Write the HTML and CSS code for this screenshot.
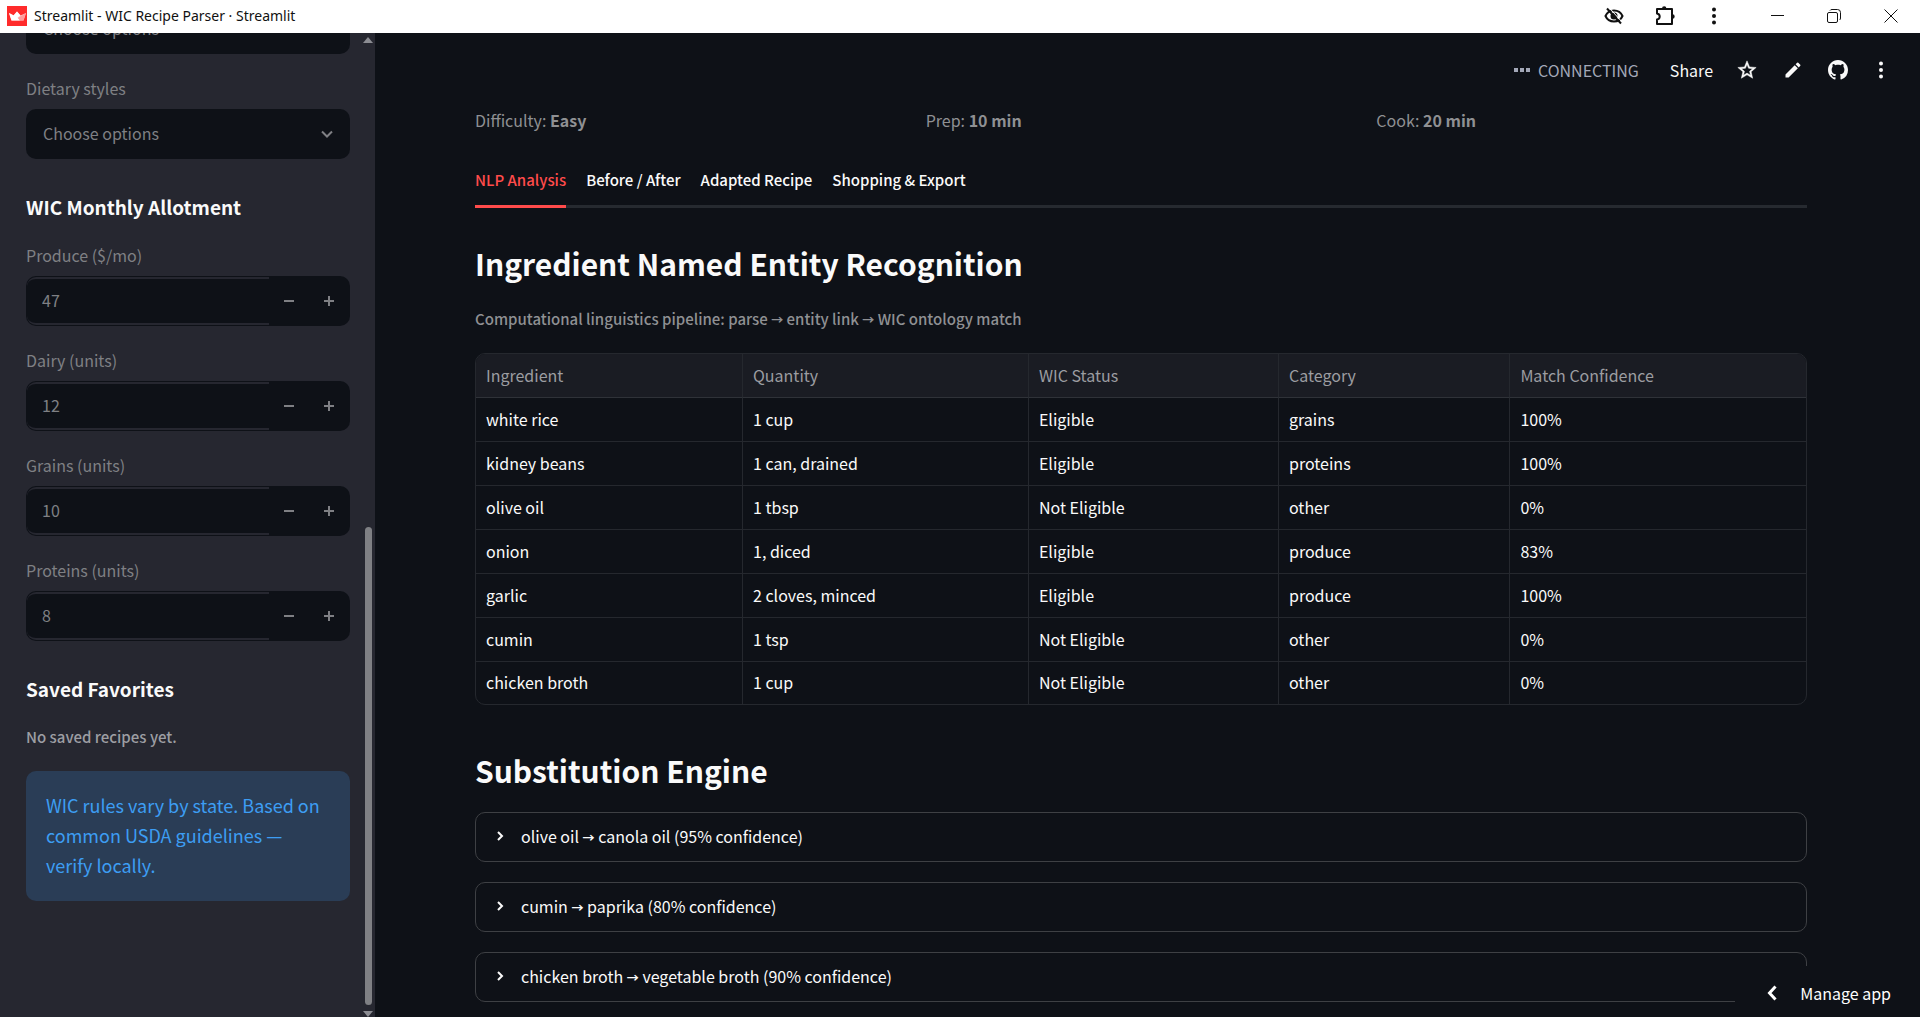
FILE: index.html
```html
<!DOCTYPE html>
<html lang="en">
<head>
<meta charset="utf-8">
<title>WIC Recipe Parser · Streamlit</title>
<link rel="stylesheet" href="styles.css">
</head>
<body>
<header class="titlebar">
  <svg class="app-logo" viewBox="0 0 20 20" aria-hidden="true"><rect width="20" height="20" fill="#ff2b2b"/><path d="M2 7l4.500 2.500L10 5.500l3.500 4L19 7l-2.500 7.500H4.500z" fill="#ffc4c4"/><path d="M2 7l8 4 3 3.500H4.500z" fill="#fff"/><path d="M10 5.500l3.500 4L10 12 6.500 9.500z" fill="#fff"/><path d="M19 7l-8 5 2 2.500h3.500z" fill="#ff9c9c"/></svg>
  <span class="window-title">Streamlit - WIC Recipe Parser · Streamlit</span>
  <div class="window-tools">
    <button class="win-btn" aria-label="Tracking blocked"><svg width="20" height="20" viewBox="0 0 20 20" fill="none" stroke="#111" stroke-width="2"><path d="M1.500 10C3 6.500 6.200 4.500 10 4.500s7 2 8.500 5.500c-1.500 3.500-4.700 5.500-8.500 5.500S3 13.500 1.500 10z"/><circle cx="10" cy="10" r="3.500" fill="#111" stroke="none"/><path d="M3 2.500l14 15"/><path d="M4.500 1l14 15.500" stroke="#fff" stroke-width="1"/></svg></button>
    <button class="win-btn" aria-label="Extensions"><svg width="22" height="22" viewBox="0 0 22 22" fill="none" stroke="#111" stroke-width="2" stroke-linejoin="round"><path d="M4 4h15v15H4v-4.500c3.600-.5 3.600-5.500 0-6z"/><path d="M9 3.500a2.200 2.200 0 0 1 4.400 0zM19.500 9.300a2.200 2.200 0 0 1 0 4.400z" fill="#111" stroke="none"/></svg></button>
    <button class="win-btn" aria-label="Browser menu"><svg width="20" height="20" viewBox="0 0 20 20" fill="#111"><circle cx="10" cy="3.500" r="2"/><circle cx="10" cy="10" r="2"/><circle cx="10" cy="16.500" r="2"/></svg></button>
  </div>
  <div class="window-controls">
    <button class="win-btn" aria-label="Minimize"><svg width="14" height="14" viewBox="0 0 14 14" stroke="#111" fill="none"><path d="M0 6.500h13"/></svg></button>
    <button class="win-btn" aria-label="Restore"><svg width="14" height="14" viewBox="0 0 14 14" stroke="#111" fill="none"><rect x=".5" y="3.500" width="10" height="10" rx="1.500"/><path d="M3 1.500Q3.500.5 5 .5h5.500q3 0 3 3V9q0 1.500-1 2"/></svg></button>
    <button class="win-btn" aria-label="Close"><svg width="14" height="14" viewBox="0 0 14 14" stroke="#111" fill="none"><path d="M.5.5l13 13M13.500.5l-13 13"/></svg></button>
  </div>
</header>
<div class="app">
  <aside class="sidebar">
    <div class="sidebar-content">
      <div class="field">
        <label class="label" for="allergies">Allergies</label>
        <div class="select-wrap"><select class="select" id="allergies"><option>Choose options</option></select></div>
      </div>
      <div class="field">
        <label class="label" for="styles">Dietary styles</label>
        <div class="select-wrap"><select class="select" id="styles"><option>Choose options</option></select><svg class="chevron" width="14" height="14" viewBox="0 0 14 14" fill="none" stroke="#7f8084" stroke-width="2"><path d="M2 4.500l5 5 5-5"/></svg></div>
      </div>
      <h3 class="side-title">WIC Monthly Allotment</h3>
      <div class="field">
        <label class="label" for="produce">Produce ($/mo)</label>
        <div class="number"><input class="number-input" id="produce" type="number" value="47"><button class="step minus" aria-label="Decrease produce"></button><button class="step plus" aria-label="Increase produce"></button></div>
      </div>
      <div class="field">
        <label class="label" for="dairy">Dairy (units)</label>
        <div class="number"><input class="number-input" id="dairy" type="number" value="12"><button class="step minus" aria-label="Decrease dairy"></button><button class="step plus" aria-label="Increase dairy"></button></div>
      </div>
      <div class="field">
        <label class="label" for="grains">Grains (units)</label>
        <div class="number"><input class="number-input" id="grains" type="number" value="10"><button class="step minus" aria-label="Decrease grains"></button><button class="step plus" aria-label="Increase grains"></button></div>
      </div>
      <div class="field">
        <label class="label" for="proteins">Proteins (units)</label>
        <div class="number"><input class="number-input" id="proteins" type="number" value="8"><button class="step minus" aria-label="Decrease proteins"></button><button class="step plus" aria-label="Increase proteins"></button></div>
      </div>
      <h3 class="side-title">Saved Favorites</h3>
      <p class="side-caption">No saved recipes yet.</p>
      <div class="alert">WIC rules vary by state. Based on common USDA guidelines — verify locally.</div>
    </div>
    <div class="scrollbar" aria-hidden="true"><span class="arrow-up"></span><span class="track"></span><span class="thumb"></span><span class="arrow-down"></span></div>
  </aside>
  <main class="main">
    <div class="toolbar">
      <span class="status"><svg width="16" height="4" viewBox="0 0 16 4" fill="#a3a8b8"><path d="M0 0h4v4H0zM6 0h4v4H6zM12 0h4v4h-4z"/></svg>CONNECTING</span>
      <button class="tool share">Share</button>
      <button class="tool" aria-label="Favorite"><svg width="22" height="22" viewBox="0 0 24 24" fill="#fafafa" stroke="#fafafa" stroke-width=".5"><path d="M22 9.240l-7.190-.62L12 2 9.190 8.630 2 9.240l5.460 4.730L5.820 21 12 17.270 18.180 21l-1.630-7.030zM12 15.400l-3.760 2.270 1-4.280-3.320-2.880 4.380-.38L12 6.100l1.710 4.040 4.380.38-3.320 2.880 1 4.280z"/></svg></button>
      <button class="tool" aria-label="Edit"><svg width="20" height="20" viewBox="0 0 24 24" fill="#fafafa"><path d="M3 17.250V21h3.750L17.810 9.940l-3.750-3.750zM20.710 7.040a1 1 0 0 0 0-1.410l-2.340-2.340a1 1 0 0 0-1.410 0l-1.830 1.830 3.750 3.750z"/></svg></button>
      <button class="tool" aria-label="View source"><svg width="20" height="20" viewBox="0 0 16 16" fill="#fafafa"><path d="M8 0C3.580 0 0 3.580 0 8c0 3.540 2.290 6.530 5.470 7.590.4.07.55-.17.55-.38 0-.19-.01-.82-.01-1.490-2.010.37-2.530-.49-2.690-.94-.09-.23-.48-.94-.82-1.130-.28-.15-.68-.52-.01-.53.63-.01 1.080.58 1.230.82.72 1.210 1.870.87 2.330.66.07-.52.28-.87.51-1.070-1.780-.2-3.640-.89-3.640-3.950 0-.87.31-1.590.82-2.150-.08-.2-.36-1.020.08-2.120 0 0 .67-.21 2.200.82.64-.18 1.320-.27 2-.27s1.360.09 2 .27c1.530-1.040 2.200-.82 2.200-.82.44 1.100.16 1.920.08 2.120.51.56.82 1.270.82 2.150 0 3.070-1.870 3.750-3.650 3.950.29.25.54.73.54 1.480 0 1.070-.01 1.930-.01 2.200 0 .21.15.46.55.38A8 8 0 0 0 16 8c0-4.420-3.580-8-8-8z"/></svg></button>
      <button class="tool" aria-label="App menu"><svg width="16" height="20" viewBox="0 0 16 20" fill="#fafafa"><circle cx="8" cy="3.500" r="2"/><circle cx="8" cy="10" r="2"/><circle cx="8" cy="16.500" r="2"/></svg></button>
    </div>
    <div class="content">
      <div class="meta"><span>Difficulty: <b>Easy</b></span><span>Prep: <b>10 min</b></span><span>Cook: <b>20 min</b></span></div>
      <nav class="tabs" role="tablist">
        <button class="tab active" role="tab" aria-selected="true">NLP Analysis</button>
        <button class="tab" role="tab">Before / After</button>
        <button class="tab" role="tab">Adapted Recipe</button>
        <button class="tab" role="tab">Shopping &amp; Export</button>
      </nav>
      <h2 class="title">Ingredient Named Entity Recognition</h2>
      <p class="caption">Computational linguistics pipeline: parse <span class="arrow">→</span> entity link <span class="arrow">→</span> WIC ontology match</p>
      <div class="table-wrap">
        <table class="table">
          <colgroup><col class="c-ingredient"><col class="c-quantity"><col class="c-status"><col class="c-category"><col></colgroup>
          <thead><tr><th>Ingredient</th><th>Quantity</th><th>WIC Status</th><th>Category</th><th>Match Confidence</th></tr></thead>
          <tbody>
            <tr><td>white rice</td><td>1 cup</td><td>Eligible</td><td>grains</td><td>100%</td></tr>
            <tr><td>kidney beans</td><td>1 can, drained</td><td>Eligible</td><td>proteins</td><td>100%</td></tr>
            <tr><td>olive oil</td><td>1 tbsp</td><td>Not Eligible</td><td>other</td><td>0%</td></tr>
            <tr><td>onion</td><td>1, diced</td><td>Eligible</td><td>produce</td><td>83%</td></tr>
            <tr><td>garlic</td><td>2 cloves, minced</td><td>Eligible</td><td>produce</td><td>100%</td></tr>
            <tr><td>cumin</td><td>1 tsp</td><td>Not Eligible</td><td>other</td><td>0%</td></tr>
            <tr><td>chicken broth</td><td>1 cup</td><td>Not Eligible</td><td>other</td><td>0%</td></tr>
          </tbody>
        </table>
      </div>
      <h2 class="title">Substitution Engine</h2>
      <div class="expanders">
        <details class="expander"><summary><svg width="12" height="12" viewBox="0 0 12 12" fill="none" stroke="#fafafa" stroke-width="2"><path d="M4 2l4 4-4 4"/></svg><span>olive oil <span class="arrow">→</span> canola oil (95% confidence)</span></summary></details>
        <details class="expander"><summary><svg width="12" height="12" viewBox="0 0 12 12" fill="none" stroke="#fafafa" stroke-width="2"><path d="M4 2l4 4-4 4"/></svg><span>cumin <span class="arrow">→</span> paprika (80% confidence)</span></summary></details>
        <details class="expander"><summary><svg width="12" height="12" viewBox="0 0 12 12" fill="none" stroke="#fafafa" stroke-width="2"><path d="M4 2l4 4-4 4"/></svg><span>chicken broth <span class="arrow">→</span> vegetable broth (90% confidence)</span></summary></details>
      </div>
    </div>
    <button class="manage"><svg width="10" height="16" viewBox="0 0 10 16" fill="none" stroke="#fff" stroke-width="3"><path d="M8.500 1.500L2.500 8l6 6.500"/></svg>Manage app</button>
  </main>
</div>
</body>
</html>
```
FILE: styles.css
```css
* { box-sizing: border-box; }
body {
  margin: 0;
  height: 100vh;
  display: flex;
  flex-direction: column;
  overflow: hidden;
  background: #0e1117;
  color: #fafafa;
  font: 16px/24px "Noto Sans CJK SC", "Noto Sans", sans-serif;
}
button, input, select { font: inherit; color: inherit; border: 0; padding: 0; background: none; }
h2, h3, p { margin: 0; }
svg { display: block; flex: none; }

.titlebar {
  flex: none;
  height: 33px;
  display: flex;
  align-items: center;
  padding: 0 6px 1px;
  background: #fff;
  color: #111;
}
.app-logo { width: 20px; height: 20px; margin: 0 7px 0 1px; }
.window-title { flex: 1; font: 14px/20px "Noto Sans", sans-serif; }
.window-tools, .window-controls { display: flex; }
.win-btn { width: 50px; height: 32px; display: grid; place-items: center; }
.window-controls { margin-left: 11px; }
.window-controls .win-btn { width: 56px; }
.window-controls .win-btn:last-child { width: 46px; margin-left: 6px; }

.app { flex: 1; min-height: 0; display: flex; }
.sidebar {
  position: relative;
  flex: none;
  width: 375px;
  background: #262730;
  overflow: hidden;
  display: flex;
  flex-direction: column;
  justify-content: flex-end;
}
.sidebar-content { padding: 0 25px 116px 26px; }
.field { margin-bottom: 20px; color: #7f8084; }
.label { display: block; height: 35px; line-height: 28px; }
.select-wrap { position: relative; }
.select {
  appearance: none;
  display: block;
  width: 100%;
  height: 50px;
  padding: 0 17px 2px;
  border-radius: 10px;
  background: #0e1117;
}
.chevron { position: absolute; right: 16px; top: 18px; }
.side-title { height: 47px; margin: 35px 0 0; font-size: 19px; line-height: 26px; font-weight: 700; }
.number {
  display: flex;
  height: 50px;
  padding: 1px;
  border-radius: 10px;
  background: #0e1117;
}
.number-input {
  appearance: textfield;
  flex: 1;
  min-width: 0;
  padding: 0 15px 2px;
  border: solid #262730;
  border-width: 2px 0;
  border-radius: 9px 0 0 9px;
}
.number-input::-webkit-inner-spin-button { appearance: none; }
.step { position: relative; width: 40px; color: #7f8084; }
.step::before, .plus::after {
  content: "";
  position: absolute;
  left: 15px;
  top: 23px;
  width: 10px;
  height: 2px;
  background: currentColor;
}
.plus::after { transform: rotate(90deg); }
.side-caption { height: 48px; font-size: 15px; line-height: 28px; font-weight: 500; color: #9d9ea3; }
.alert {
  padding: 19px 20px 21px;
  border-radius: 10px;
  background: #2a3d56;
  color: #3d9df3;
  font-size: 18px;
  line-height: 30px;
}
.scrollbar { position: absolute; inset: 0 0 0 auto; width: 12px; display: flex; flex-direction: column; align-items: flex-start; }
.arrow-up, .arrow-down { border: solid transparent; border-width: 0 5px; }
.arrow-up { margin-top: 4px; border-bottom: 6px solid #8b8c92; }
.arrow-down { margin-top: 6px; border-top: 6px solid #8b8c92; }
.track { flex: 1; }
.thumb { width: 7px; height: 48.6%; margin-left: 2px; border-radius: 4px; background: #7f8084; }

.main { position: relative; flex: 1; min-width: 0; }
.toolbar { display: flex; align-items: center; justify-content: flex-end; height: 74px; padding: 0 31px 0 0; gap: 25px; }
.status { display: flex; align-items: center; gap: 8px; margin-right: 6px; color: #a3a8b8; }
.share { margin-right: -2px; }
.content { padding: 1px 113px 0 100px; }
.meta { display: grid; grid-template-columns: repeat(3, 1fr); gap: 20px; color: #8f9093; margin-bottom: 29px; }
.meta b { font-weight: 700; }
.tabs { display: flex; gap: 20px; height: 47px; border-bottom: 3px solid #262a30; margin-bottom: 34px; }
.tab { height: 47px; padding-bottom: 6px; border-bottom: 3px solid transparent; font-size: 15px; font-weight: 500; }
.tab.active { color: #ff4b4b; border-color: #ff4b4b; }
.title { font-size: 30px; line-height: 42px; font-weight: 700; }
.caption { margin: 23px 0 22px; color: #8f9093; font-size: 15px; font-weight: 500; }
.arrow { font-size: 12px; line-height: 12px; font-weight: 700; }
.table-wrap { border: 1px solid #25282e; border-radius: 10px; overflow: hidden; margin-bottom: 44px; }
.table { width: 100%; table-layout: fixed; border-collapse: separate; border-spacing: 0; }
.c-ingredient { width: 20%; }
.c-quantity { width: 21.5%; }
.c-status { width: 18.8%; }
.c-category { width: 17.4%; }
.table th { height: 44px; background: #1a1c23; color: #9c9da1; font-weight: 400; }
.table td { height: 44px; }
.table th, .table td { padding: 0 10px 2px; text-align: left; border: solid #25282e; border-width: 0 0 1px 1px; }
.table th:first-child, .table td:first-child { border-left: 0; }
.table tr:last-child td { height: 42px; border-bottom: 0; }
.table thead tr th { border-bottom: 1px solid #2f3238; }
.expanders { display: flex; flex-direction: column; gap: 20px; margin-top: 21px; }
.expander { border: 1px solid #3e4044; border-radius: 10px; }
.expander summary { display: flex; align-items: center; gap: 15px; height: 48px; padding: 0 18px 2px; list-style: none; }
.manage {
  position: absolute;
  right: 0;
  bottom: 0;
  height: 51px;
  padding: 3px 29px 0 32px;
  display: flex;
  align-items: center;
  gap: 23px;
  background: #0e1117;
  color: #fff;
}
```
